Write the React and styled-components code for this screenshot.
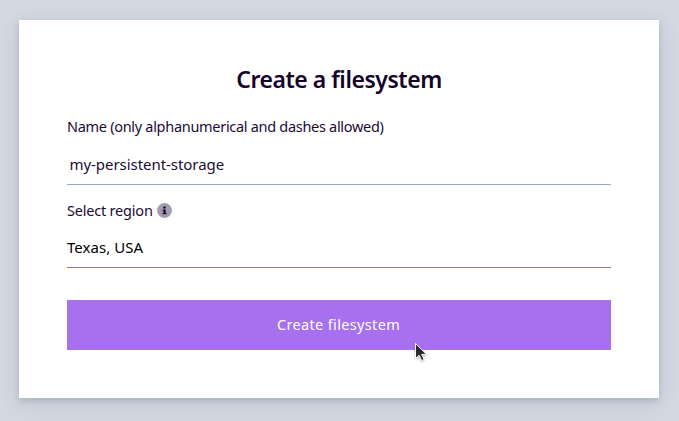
import React from "react";
import styled, { createGlobalStyle } from "styled-components";

const GlobalStyle = createGlobalStyle`
  * { box-sizing: border-box; }
  body { margin: 0; background: #d3d8e1; font-family: "Noto Sans", sans-serif; color: #1b0b35; }
`;
const Page = styled.main`
  height: 421px;
  padding: 20px 20px 23px 19px;
  overflow: hidden;
`;
const Card = styled.form`
  position: relative;
  display: flex;
  flex-direction: column;
  height: 378px;
  padding: 41px 48px 48px;
  background: #fff;
  box-shadow: 0 3px 6px rgba(70, 85, 105, 0.2), 0 5px 20px rgba(70, 85, 105, 0.14);
`;
const Title = styled.h1`
  margin: 0;
  height: 36px;
  font-size: 23px;
  line-height: 36px;
  font-weight: 650;
  letter-spacing: -0.47px;
  text-align: center;
  color: #14032b;
`;
const Label = styled.label`
  display: flex;
  align-items: center;
  gap: 4px;
  height: 20px;
  margin-top: ${(p) => p.$gap}px;
  font-size: 14.5px;
  letter-spacing: ${(p) => p.$spacing}px;
  white-space: nowrap;
`;
const Field = styled.div`
  display: flex;
  align-items: center;
  height: ${(p) => p.$height}px;
  padding: 7px 0 0 ${(p) => p.$inset || 0}px;
  border-bottom: 1px solid ${(p) => p.$line};
  font-size: 15px;
  letter-spacing: ${(p) => p.$spacing}px;
  color: ${(p) => p.$color};
`;
const Submit = styled.button`
  height: 50px;
  margin: 32px 0 0;
  padding: 0 1px 2px 0;
  border: 0;
  background: #a770ef;
  color: #fff;
  font: 400 14.5px "Noto Sans", sans-serif;
  letter-spacing: 0.35px;
`;
const InfoIcon = styled.svg`
  width: 15px;
  height: 15px;
`;
const Pointer = styled.svg`
  position: absolute;
  left: 395px;
  top: 322px;
  width: 14px;
  height: 22px;
  filter: drop-shadow(0 1px 1px rgba(0, 0, 0, 0.3));
`;

export default function App() {
  return (
    <Page>
      <GlobalStyle />
      <Card>
        <Title>Create a filesystem</Title>
        <Label $gap={19} $spacing={-0.3}>Name (only alphanumerical and dashes allowed)</Label>
        <Field $height={49} $inset={2.5} $line="#9aa8bb" $spacing={-0.05} $color="#1b0b35">my-persistent-storage</Field>
        <Label $gap={15} $spacing={-0.2}>
          <span>Select region</span>
          <InfoIcon viewBox="0 0 15 15">
            <circle cx="7.5" cy="7.5" r="7.4" fill="#a39caf" />
            <path d="M6.3 3.5h2.3v2H6.3zM5.6 6.4h3V10h.9v1.2H5.5V10h.9V7.6h-.8z" fill="#14032b" />
          </InfoIcon>
        </Label>
        <Field $height={48} $line="#a266f5" $spacing={0.05} $color="#000">Texas, USA</Field>
        <Submit type="button">Create filesystem</Submit>
        <Pointer viewBox="0 0 14 22">
          <path d="M1.5 1.5v15l3.6-3.2 2.5 5.3 2.6-1.2-2.5-5h5z" fill="#2b2b2b" stroke="#fff" strokeWidth="1" />
        </Pointer>
      </Card>
    </Page>
  );
}
